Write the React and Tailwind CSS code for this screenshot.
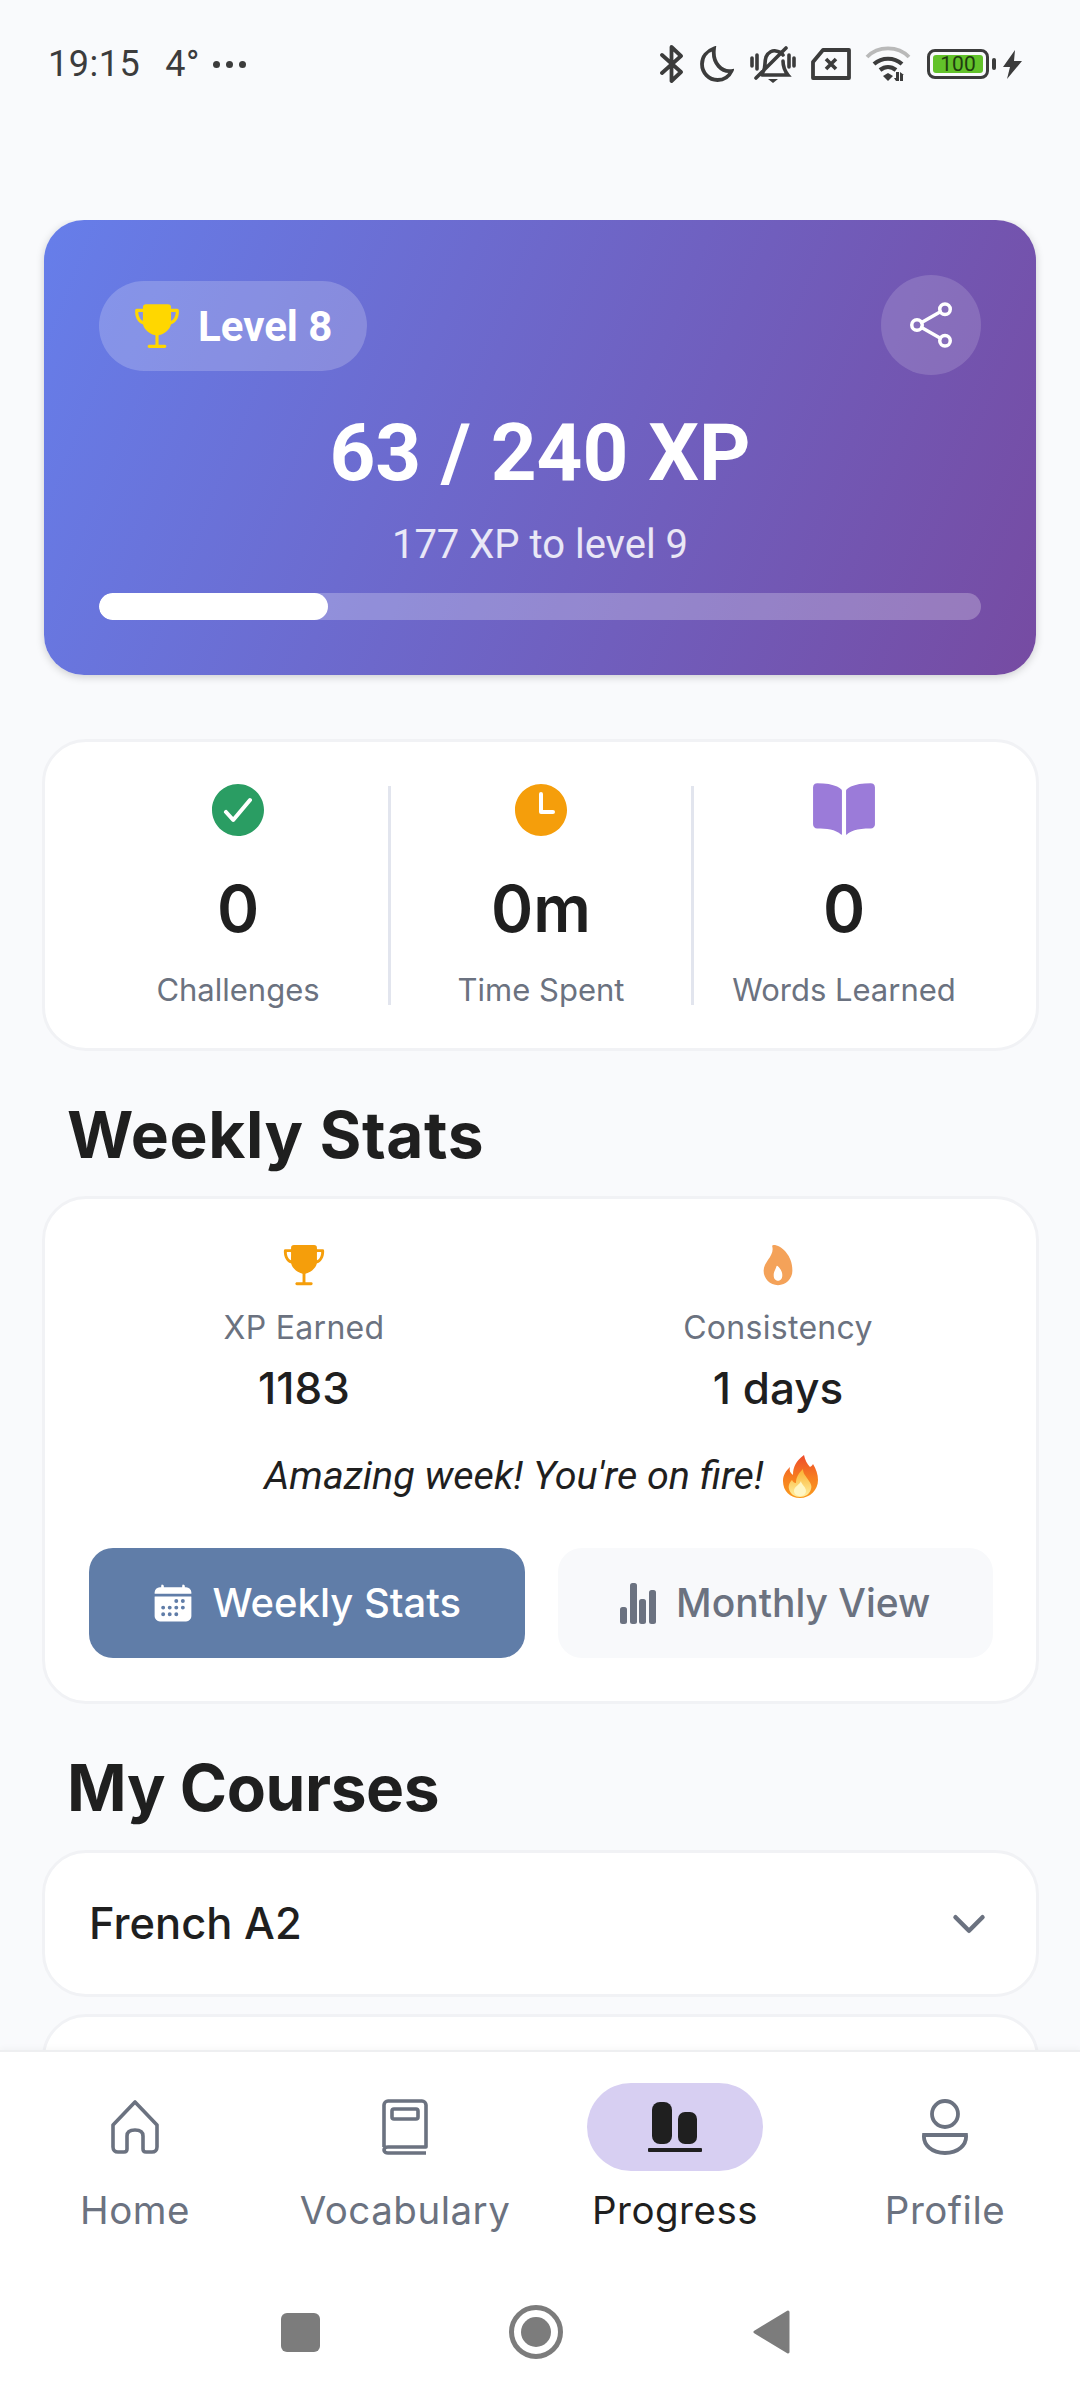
import React from "react";
import { IoTrophy, IoShareSocialOutline, IoCheckmarkCircle, IoTime, IoBook, IoFlame, IoCalendar, IoChevronDown } from "react-icons/io5";

const grotesk = "font-['Inter','Liberation_Sans',sans-serif]";

function StatusIcons() {
  const c = "#3c3c3c";
  return (
    <div className="flex items-center absolute left-[660px] top-[44px]">
      <svg width="24" height="38" viewBox="0 0 24 38" fill="none" stroke={c} strokeWidth="3.8" strokeLinejoin="round" strokeLinecap="round"><path d="M2 10 21 27 11.500 36V2L21 11 2 28" /></svg>
      <svg className="ml-[16px]" width="34" height="36" viewBox="0 0 34 36" fill="none" stroke={c} strokeWidth="3.8"><path d="M14 2.500C7 5 2 10.500 2 18c0 9 7 16 15.500 16 6.500 0 11.500-3.500 14-9-9 1.500-19.500-7-17.500-22.500Z" /></svg>
      <svg className="ml-[16px]" width="46" height="40" viewBox="0 0 46 40" fill="none" stroke={c} strokeWidth="3.600" strokeLinecap="round"><path d="M13 28c3-4 1-9 3-15 2-5 7-7 10-6 3 .5 6 2 7 4M33 17c0 5 1 9 5 14H12M36 4 6 34M2 14v8M7 11v14M39 11v12M44 14v8" /><path d="M18 35h10l-5 4Z" fill={c} stroke="none" /></svg>
      <svg className="ml-[15px]" width="40" height="32" viewBox="0 0 40 32" fill="none" stroke={c} strokeWidth="3.800" strokeLinejoin="round"><path d="M2 14 12 2h26v28H2Z" /><path d="m15 11 10 10M25 11 15 21" strokeWidth="3.600" /></svg>
      <svg className="ml-[14px]" width="46" height="36" viewBox="0 0 46 36" fill="none" strokeLinecap="butt"><path d="M2 11C13-.5 33-.5 44 11" stroke="#b9b9b9" strokeWidth="3.800" /><path d="M9 18c8-7 20-7 28 0" stroke={c} strokeWidth="4.200" /><path d="M15 24c5-4 11-4 16 0" stroke={c} strokeWidth="4.200" /><path d="m18 30 5-3 5 3-5 5Z" fill={c} /><path d="M31 26h3v9h-3l-2-3h2ZM38 35h-3v-9l4 3h-1Z" fill={c} /></svg>
      <div className="ml-[16px] relative w-[62px] h-[30px] rounded-[8px] border-[3px] border-[#3c3c3c] p-[3px]">
        <div className="w-full h-full rounded-[3px] bg-[#62c22a] flex items-center justify-center text-[21px] leading-none text-[#1f3d10] font-['Roboto',sans-serif]">100</div>
      </div>
      <div className="ml-[3px] w-[4px] h-[12px] rounded-[2px] bg-[#3c3c3c]" />
      <svg className="ml-[7px]" width="19" height="29" viewBox="0 0 19 29" fill={c}><path d="M12 0 0 17h7l-3 12 15-18h-8Z" /></svg>
    </div>
  );
}

function HomeIcon() {
  return (
    <svg width="50" height="54" viewBox="0 0 50 54" fill="none" stroke="#6b7280" strokeWidth="3.600" strokeLinejoin="round">
      <path d="M25 2 3 25v22c0 3 2 5 5 5h6c2 0 3-1 3-3V36c0-4 3-6 8-6s8 2 8 6v13c0 2 1 3 3 3h6c3 0 5-2 5-5V25Z" />
    </svg>
  );
}
function BookIcon() {
  return (
    <svg width="46" height="56" viewBox="0 0 46 56" fill="none" stroke="#6b7280" strokeWidth="3.600" strokeLinejoin="round">
      <path d="M2 48V6c0-2 2-4 4-4h34c2 0 4 2 4 4v42H6c-2 0-4 1-4 3s2 3 4 3h38" />
      <rect x="10" y="10" width="26" height="10" rx="2" />
    </svg>
  );
}
function ProgressIcon() {
  return (
    <svg width="56" height="50" viewBox="0 0 56 50" fill="#1f1f1f">
      <rect x="5" y="0" width="20" height="42" rx="8" />
      <rect x="31" y="10" width="19" height="32" rx="7" />
      <rect x="1" y="46" width="54" height="4" rx="1" />
    </svg>
  );
}
function ProfileIcon() {
  return (
    <svg width="46" height="56" viewBox="0 0 46 56" fill="none" stroke="#6b7280" strokeWidth="3.800">
      <circle cx="23" cy="15" r="13" />
      <path d="M2 36h42c1 10-8 18-21 18S1 46 2 36Z" />
    </svg>
  );
}
function FireEmoji() {
  return (
    <svg width="35" height="43" viewBox="0 0 35 43" className="inline-block">
      <defs>
        <linearGradient id="fa" x1="0" y1="0" x2="0" y2="1"><stop offset="0" stopColor="#ee4b2b" /><stop offset="0.55" stopColor="#f7801f" /><stop offset="1" stopColor="#fa9a1f" /></linearGradient>
        <linearGradient id="fb" x1="0" y1="0" x2="0" y2="1"><stop offset="0" stopColor="#fbb030" /><stop offset="1" stopColor="#fff0a0" /></linearGradient>
      </defs>
      <path d="M21 0c1 5 3 9 6 12 1-1 2-1 3-3 3 5 5 10 5 16 0 10-8 18-18 18S0 36 0 26c0-6 3-10 7-14-1 3 0 6 3 8 0-8 3-14 11-20Z" fill="url(#fa)" />
      <path d="M20 14c0 5 3 7 6 12 2 3 3 5 2 8-1 5-6 8-11 8S7 39 6 34c-1-4 1-7 3-9 1 2 2 3 4 3 0-6 3-10 7-14Z" fill="url(#fb)" />
      <path d="M18 26c0 3 5 6 5 10 0 3-3 5-6 5s-6-2-6-5c0-5 6-6 7-10Z" fill="#fff6c4" />
    </svg>
  );
}
function BarsIcon() {
  return (
    <svg width="36" height="41" viewBox="0 0 36 41" fill="#6b7280">
      <rect x="0" y="24" width="7" height="17" rx="2.500" />
      <rect x="10" y="0" width="7" height="41" rx="2.500" />
      <rect x="19" y="16" width="7" height="25" rx="2.500" />
      <rect x="29" y="7" width="7" height="34" rx="2.500" />
    </svg>
  );
}

function Stat({ icon, value, label, border }) {
  return (
    <div className={`flex-1 h-[219px] flex flex-col items-center ${border ? "border-r-[3px] border-[#e2e5ee]" : ""}`}>
      <div className="h-[54px] -mt-[3px] flex items-center justify-center">{icon}</div>
      <div className={`mt-[34px] h-[76px] leading-[76px] text-[64px] font-semibold text-[#1f1f1f] ${grotesk}`}>{value}</div>
      <div className={`mt-[23px] h-[40px] leading-[40px] text-[31px] text-[#6b7280] ${grotesk}`}>{label}</div>
    </div>
  );
}

function Nav({ icon, label, active }) {
  return (
    <div className="flex flex-col items-center">
      <div className={`w-[176px] h-[88px] rounded-[44px] flex items-center justify-center ${active ? "bg-[#d7cff2]" : ""}`}>{icon}</div>
      <div className={`mt-[17px] h-[44px] leading-[44px] text-[38.500px] tracking-[0.5px] ${grotesk} ${active ? "text-[#1f1f1f]" : "text-[#6b7280]"}`}>{label}</div>
    </div>
  );
}

export default function App() {
  const card = "ml-[42px] mr-[41px] bg-white rounded-[44px] border-[3px] border-[#f1f2f5]";
  const label = `h-[40px] leading-[40px] text-[32px] tracking-[0.3px] text-[#6b7280] ${grotesk}`;
  const val = `h-[44px] leading-[44px] text-[44px] font-medium text-[#1f1f1f] ${grotesk}`;
  const heading = `ml-[67px] mt-[49px] h-[70px] leading-[70px] text-[64px] font-bold text-[#1f1f1f] ${grotesk}`;
  return (
    <div className="relative w-[1080px] h-[2400px] overflow-hidden bg-[#f9fafc] flex flex-col">
      <div className="relative h-[220px] shrink-0">
        <div className="absolute left-[48px] top-[44px] flex items-center gap-[25px] text-[36px] leading-[40px] tracking-[0.5px] text-[#3c3c3c] font-['Roboto',sans-serif]">
          <span>19:15</span>
          <span>4°</span>
          <span className="flex gap-[6px] -ml-[12px]">
            <i className="w-[7px] h-[7px] rounded-full bg-[#3c3c3c]" />
            <i className="w-[7px] h-[7px] rounded-full bg-[#3c3c3c]" />
            <i className="w-[7px] h-[7px] rounded-full bg-[#3c3c3c]" />
          </span>
        </div>
        <StatusIcons />
      </div>

      <div className="flex-1 min-h-0 overflow-hidden">
        <div className="mx-[44px] h-[455px] rounded-[40px] p-[55px] bg-[linear-gradient(112deg,#667eea,#764ba2)] shadow-[0_2px_8px_rgba(0,0,0,0.18)] font-['Roboto',sans-serif] text-white">
          <div className="flex items-center justify-between h-[100px]">
            <div className="mt-[2px] w-[268px] h-[90px] rounded-[45px] bg-white/20 flex items-center pl-[33px]">
              <IoTrophy size={50} color="#ffd700" />
              <span className="ml-[16px] text-[42px] font-bold">Level 8</span>
            </div>
            <div className="w-[100px] h-[100px] rounded-full bg-white/15 flex items-center justify-center">
              <IoShareSocialOutline size={56} color="#fff" />
            </div>
          </div>
          <div className="mt-[36px] h-[84px] leading-[84px] text-center text-[80px] font-bold">63 / 240 XP</div>
          <div className="mt-[28px] h-[44px] leading-[44px] text-center text-[40px] text-white/85">177 XP to level 9</div>
          <div className="mt-[26px] h-[27px] rounded-[14px] bg-white/25 overflow-hidden">
            <div className="w-[229px] h-full rounded-[14px] bg-white" />
          </div>
        </div>

        <div className={`${card} mt-[64px] h-[312px] pl-[43px] pr-[42px] pt-[44px] flex`}>
          <Stat border icon={<IoCheckmarkCircle size={64} color="#2a9d63" />} value="0" label="Challenges" />
          <Stat border icon={<IoTime size={64} color="#f59e0b" />} value="0m" label="Time Spent" />
          <Stat icon={<IoBook size={66} color="#9b7bd9" />} value="0" label="Words Learned" />
        </div>

        <div className={`${heading} tracking-[0.6px]`}>Weekly Stats</div>

        <div className={`${card} mt-[26px] h-[508px] pl-[44px] pr-[43px] pt-[43px] flex flex-col`}>
          <div className="flex -mx-[22px]">
            <div className="flex-1 flex flex-col items-center">
              <IoTrophy size={46} color="#f59e0b" />
              <div className={`mt-[20px] ${label}`}>XP Earned</div>
              <div className={`mt-[18px] ${val}`}>1183</div>
            </div>
            <div className="flex-1 flex flex-col items-center">
              <IoFlame size={46} color="#f4a259" />
              <div className={`mt-[20px] ${label}`}>Consistency</div>
              <div className={`mt-[18px] ${val}`}>1 days</div>
            </div>
          </div>
          <div className="mt-[44px] h-[44px] flex items-center justify-center gap-[19px] text-[39.500px] italic text-[#1f1f1f] font-['Roboto',sans-serif]">
            <span>Amazing week! You're on fire!</span>
            <FireEmoji />
          </div>
          <div className="mt-[50px] flex gap-[33px]">
            <div className="flex-1 h-[110px] rounded-[24px] bg-[#607da8] flex items-center justify-center gap-[18px]">
              <IoCalendar size={42} color="#fff" />
              <span className={`text-[40px] font-medium text-white ${grotesk}`}>Weekly Stats</span>
            </div>
            <div className="flex-1 h-[110px] rounded-[24px] bg-[#f8f9fb] flex items-center justify-center gap-[20px]">
              <BarsIcon />
              <span className={`text-[39px] font-medium text-[#6b7280] ${grotesk}`}>Monthly View</span>
            </div>
          </div>
        </div>

        <div className={`${heading} tracking-[-0.4px]`}>My Courses</div>

        <div className={`${card} mt-[27px] h-[147px] pl-[44px] pr-[43px] flex items-center justify-between`}>
          <span className={`text-[43.500px] font-medium text-[#1f1f1f] ${grotesk}`}>French A2</span>
          <IoChevronDown size={48} color="#6b7280" />
        </div>
        <div className={`${card} mt-[17px] h-[147px]`} />
      </div>

      <div className="h-[350px] shrink-0 bg-white border-t-[2px] border-[#eeeff1] shadow-[0_-2px_6px_rgba(0,0,0,0.03)]">
        <div className="grid grid-cols-4 pt-[31px]">
          <Nav icon={<HomeIcon />} label="Home" />
          <Nav icon={<BookIcon />} label="Vocabulary" />
          <Nav icon={<ProgressIcon />} label="Progress" active />
          <Nav icon={<ProfileIcon />} label="Profile" />
        </div>
        <div className="mt-[73px] pr-[10px] flex items-center justify-center">
          <div className="w-[39px] h-[39px] rounded-[6px] bg-[#7c7c7c] mr-[189px]" />
          <svg width="54" height="54" viewBox="0 0 54 54" className="mr-[189px]"><circle cx="27" cy="27" r="24.500" fill="none" stroke="#7c7c7c" strokeWidth="5" /><circle cx="27" cy="27" r="15" fill="#7c7c7c" /></svg>
          <svg width="38" height="46" viewBox="0 0 38 46"><path d="M36 3 3 23l33 20Z" fill="#7c7c7c" stroke="#7c7c7c" strokeWidth="3" strokeLinejoin="round" /></svg>
        </div>
      </div>
    </div>
  );
}
